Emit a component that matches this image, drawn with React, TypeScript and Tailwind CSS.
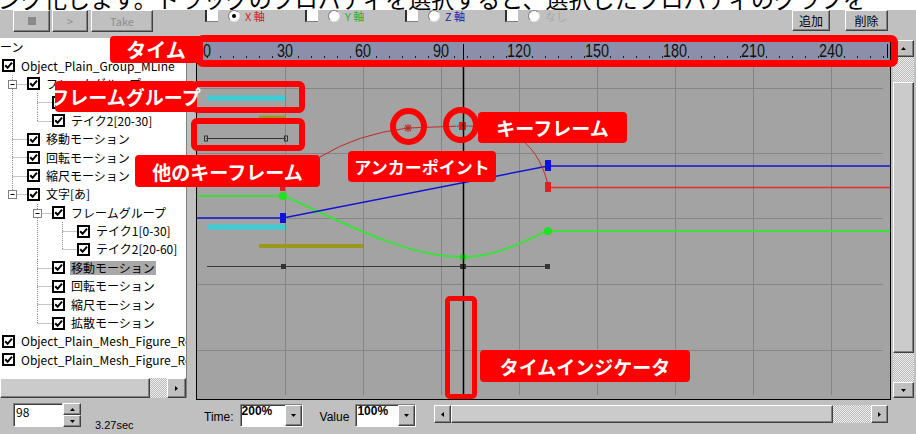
import React from "react";

const raised =
  "bg-[#c0c0c0] border border-t-white border-l-white border-r-[#404040] border-b-[#404040] shadow-[inset_-1px_-1px_0_#808080]";
const sunken =
  "bg-white border border-t-[#808080] border-l-[#808080] border-r-white border-b-white shadow-[inset_1px_1px_0_#404040]";
const dots = "bg-[repeating-conic-gradient(#b8b8b8_0_25%,#f0f0f0_0_50%)] bg-[length:2px_2px]";

type Row = { g: string[]; label: string; sel?: boolean };

const rows: Row[] = [
  { g: [], label: "Object_Plain_Group_MLine" },
  { g: ["Te"], label: "フレームグループ" },
  { g: ["v", "T"], label: "テイク1[0-30]" },
  { g: ["v", "L"], label: "テイク2[20-30]" },
  { g: ["T"], label: "移動モーション" },
  { g: ["T"], label: "回転モーション" },
  { g: ["T"], label: "縮尺モーション" },
  { g: ["Le"], label: "文字[あ]" },
  { g: [" ", "Te"], label: "フレームグループ" },
  { g: [" ", "v", "T"], label: "テイク1[0-30]" },
  { g: [" ", "v", "L"], label: "テイク2[20-60]" },
  { g: [" ", "T"], label: "移動モーション", sel: true },
  { g: [" ", "T"], label: "回転モーション" },
  { g: [" ", "T"], label: "縮尺モーション" },
  { g: [" ", "L"], label: "拡散モーション" },
  { g: [], label: "Object_Plain_Mesh_Figure_Ro" },
  { g: [], label: "Object_Plain_Mesh_Figure_Ro" },
];

const axes = [
  { label: "X 軸", color: "text-[#d42020]", on: true },
  { label: "Y 軸", color: "text-[#2fae2f]", on: false },
  { label: "Z 軸", color: "text-[#2424a8]", on: false },
  { label: "なし", color: "text-[#a8a8a8]", on: false },
];

const frames = [0, 30, 60, 90, 120, 150, 180, 210, 240];
const vGrid = [88, 166, 244, 322, 400, 478, 556, 634];
const hGrid = [28, 93, 158, 224, 290];

function Tri({ dir }: { dir: "up" | "down" | "left" | "right" }) {
  const v = dir === "up" || dir === "down";
  const pts = {
    up: "0,3 2.5,0 5,3",
    down: "0,0 2.5,3 5,0",
    left: "3,0 0,2.5 3,5",
    right: "0,0 3,2.5 0,5",
  }[dir];
  return (
    <svg width={v ? 5 : 3} height={v ? 3 : 5} viewBox={v ? "0 0 5 3" : "0 0 3 5"}>
      <polygon points={pts} fill="black" />
    </svg>
  );
}

function Check() {
  return (
    <svg width="13" height="13" viewBox="0 0 13 13" className="shrink-0">
      <rect x="1" y="1" width="11" height="11" fill="white" stroke="black" strokeWidth="2" />
      <path d="M3.2 6.2 L5.6 8.8 L10 3.6" fill="none" stroke="black" strokeWidth="2" />
    </svg>
  );
}

function Guide({ t }: { t: string }) {
  const dash = { stroke: "#8a8a8a", strokeDasharray: "1 1" };
  return (
    <svg width="25" height="18.4" viewBox="0 0 25 18.4" className="shrink-0">
      {(t === "v" || t.startsWith("T")) && <line x1="10.5" y1="0" x2="10.5" y2="18.4" {...dash} />}
      {t.startsWith("L") && <line x1="10.5" y1="0" x2="10.5" y2="9.5" {...dash} />}
      {t !== " " && t !== "v" && <line x1="10.5" y1="9.5" x2="25" y2="9.5" {...dash} />}
      {t.endsWith("e") && (
        <>
          <rect x="6.5" y="5.5" width="8" height="8" fill="white" stroke="#808080" />
          <line x1="8.5" y1="9.5" x2="12.5" y2="9.5" stroke="black" />
        </>
      )}
    </svg>
  );
}

function Radio({ on }: { on: boolean }) {
  return (
    <span className="ml-[10px] w-[12px] h-[12px] rounded-full bg-white border border-t-[#808080] border-l-[#808080] border-r-[#e4e4e4] border-b-[#e4e4e4] flex items-center justify-center">
      {on && <span className="w-[4px] h-[4px] rounded-full bg-black" />}
    </span>
  );
}

function Ruler() {
  const ticks = Array.from({ length: 53 }, (_, i) => 10 + i * 13);
  return (
    <svg width="693" height="20" className="block bg-[#8c8fa9]">
      {ticks.map((x) => (
        <line key={x} x1={x + 0.5} y1="16" x2={x + 0.5} y2="18" stroke="#1a1a1a" />
      ))}
      {frames.map((f, i) => (
        <text
          key={f}
          x={10 + i * 78}
          y="17"
          textAnchor="middle"
          fontSize="18"
          fontFamily="Liberation Sans, sans-serif"
          textLength={String(f).length * 8}
          lengthAdjust="spacingAndGlyphs"
          fill="#111"
        >
          {f}
        </text>
      ))}
      <line x1="266.5" y1="4" x2="266.5" y2="20" stroke="black" />
      <line x1="690.5" y1="4" x2="690.5" y2="18" stroke="black" />
    </svg>
  );
}

function Graph() {
  return (
    <svg width="693" height="339" className="block bg-[#a3a3a3]">
      {vGrid.map((x) => (
        <line key={x} x1={x + 0.5} y1="0" x2={x + 0.5} y2="335" stroke="#858585" />
      ))}
      {hGrid.map((y) => (
        <line key={y} x1="0" y1={y + 0.5} x2="686" y2={y + 0.5} stroke="#858585" />
      ))}

      {/* frame group bars */}
      <line x1="10" y1="38" x2="88" y2="38" stroke="#3ccdd6" strokeWidth="5" />
      <line x1="62" y1="57" x2="89" y2="57" stroke="#9c981c" strokeWidth="3" />
      <line x1="10" y1="167" x2="88" y2="167" stroke="#3ccdd6" strokeWidth="5" />
      <line x1="62" y1="186" x2="166" y2="186" stroke="#9c981c" strokeWidth="4" />

      {/* other keyframe line */}
      <line x1="9" y1="78.5" x2="89" y2="78.5" stroke="#333" />
      <rect x="7.5" y="76" width="3" height="5" fill="none" stroke="#333" />
      <rect x="87.5" y="76" width="3" height="5" fill="none" stroke="#333" />

      {/* dark track */}
      <line x1="10" y1="206.5" x2="351" y2="206.5" stroke="#3a3a3a" />
      <rect x="84" y="204" width="5" height="5" fill="#333" />
      <rect x="263" y="204" width="6" height="5" fill="#333" />
      <rect x="348" y="204" width="5" height="5" fill="#333" />

      {/* green */}
      <path
        d="M0 136 L86 136 C120 148 200 197 266 197 C300 197 330 180 350 171 L693 171"
        fill="none"
        stroke="#3be03b"
        strokeWidth="2"
      />
      <circle cx="86" cy="136" r="4" fill="#22e022" />
      <circle cx="266" cy="197" r="3.5" fill="#22e022" />
      <circle cx="351" cy="171" r="4" fill="#22e022" />

      {/* red marker + line */}
      <rect x="83" y="125" width="5" height="6" fill="#e02020" />
      <line x1="351" y1="127.5" x2="693" y2="127.5" stroke="#e03030" strokeWidth="1.5" />
      <rect x="348" y="122" width="6" height="10" fill="#e02020" />

      {/* blue */}
      <path d="M0 158 L86 158 L351 106 L693 106" fill="none" stroke="#1414d0" strokeWidth="1.5" />
      <rect x="83" y="153" width="6" height="10" fill="#1010e0" />
      <rect x="348" y="100" width="6" height="11" fill="#1010e0" />

      {/* bezier handle */}
      <path d="M123 97 Q160 74 211 68 L265 66" fill="none" stroke="#c02828" />
      <path d="M265 66 C310 66 338 76 351 124" fill="none" stroke="#c02828" />
      <g stroke="#c02828" strokeWidth="1.2">
        <line x1="207" y1="68" x2="215" y2="68" />
        <line x1="211" y1="64" x2="211" y2="72" />
        <line x1="208" y1="65" x2="214" y2="71" />
        <line x1="214" y1="65" x2="208" y2="71" />
      </g>
      <rect x="259.5" y="59.5" width="12" height="12" fill="none" stroke="#3ccdd6" strokeDasharray="1 1" />
      <rect x="262" y="62" width="7" height="8" fill="#e02020" />

      {/* time indicator */}
      <line x1="266.5" y1="0" x2="266.5" y2="339" stroke="black" strokeWidth="1.5" />
    </svg>
  );
}

function Tag({ className, children }: { className: string; children: React.ReactNode }) {
  return (
    <div
      className={`absolute flex items-center justify-center rounded-[4px] bg-[#ff0000] text-white font-bold leading-none whitespace-nowrap ${className}`}
    >
      {children}
    </div>
  );
}

export default function App() {
  return (
    <div className="relative w-[916px] h-[434px] overflow-hidden bg-[#c0c0c0] font-['Noto_Sans_CJK_JP',sans-serif] text-black">
      {/* caption strip above the window */}
      <div className="h-[10px] bg-white overflow-hidden">
        <div className="-mt-[13px] -ml-[2px] text-[23px] leading-[23px] whitespace-nowrap">
          ング化します。ドラッグのプロパティを選択すると、選択したプロパティのグラフを
        </div>
      </div>

      {/* toolbar */}
      <div className="h-[28px] flex items-start">
        <button className={`ml-[13px] w-[37px] h-[22px] flex items-center justify-center ${raised}`}>
          <span className="w-[8px] h-[8px] bg-[#8a8a8a]" />
        </button>
        <button className={`ml-[2px] w-[36px] h-[22px] flex items-center justify-center text-[11px] text-[#8c8c8c] ${raised}`}>
          &gt;
        </button>
        <button className={`ml-[3px] w-[62px] h-[22px] flex items-center justify-center text-[11px] text-[#8c8c8c] ${raised}`}>
          Take
        </button>
        <div className="ml-[52px] flex">
          {axes.map((a) => (
            <div key={a.label} className="w-[100px] h-[12px] flex items-center">
              <span className="w-[13px] h-[12px] bg-white border-l-2 border-l-[#303030] border-b border-b-[#808080]" />
              <Radio on={a.on} />
              <span className={`ml-[5px] text-[11px] leading-[12px] ${a.color}`}>{a.label}</span>
            </div>
          ))}
        </div>
        <button className={`ml-[187px] w-[38px] h-[21px] flex items-center justify-center text-[12px] ${raised}`}>
          追加
        </button>
        <button className={`ml-[15px] w-[43px] h-[21px] flex items-center justify-center text-[12px] ${raised}`}>
          削除
        </button>
      </div>

      {/* main */}
      <div className="h-[362px] flex items-start">
        {/* tree */}
        <div className="w-[187px] h-[360px] bg-white flex flex-col border-r border-[#808080]">
          <div className="flex-1 overflow-hidden">
            <div className="h-[18.4px] flex items-center text-[12px] leading-[14px]">ーン</div>
            {rows.map((r, i) => (
              <div key={i} className="h-[18.4px] flex items-center pl-[2px] whitespace-nowrap">
                {r.g.map((t, j) => (
                  <Guide key={j} t={t} />
                ))}
                <Check />
                <span className={`ml-[5px] px-[1px] text-[12px] leading-[14px] ${r.sel ? "bg-[#a8a8a8]" : ""}`}>
                  {r.label}
                </span>
              </div>
            ))}
          </div>
          <div className="h-[20px] flex bg-[#c0c0c0]">
            <div className={`w-[150px] ${raised} bg-[#cbcbcb]`} />
            <div className={`flex-1 ${dots}`} />
            <div className={`w-[19px] flex items-center justify-center ${raised}`}>
              <Tri dir="right" />
            </div>
          </div>
        </div>

        <div className="w-[9px]" />

        {/* graph */}
        <div className="mt-[2px] w-[695px] h-[360px] border-l border-r border-b border-black flex flex-col">
          <Ruler />
          <Graph />
        </div>

        {/* vertical scrollbar */}
        <div className="ml-[2px] mt-[2px] w-[21px] h-[358px] flex flex-col">
          <div className={`h-[17px] flex items-center justify-center ${raised}`}>
            <Tri dir="up" />
          </div>
          <div className={`h-[25px] ${dots}`} />
          <div className={`flex-1 ${raised} bg-[#cbcbcb]`} />
          <div className={`h-[29px] ${dots}`} />
          <div className={`h-[16px] flex items-center justify-center ${raised}`}>
            <Tri dir="down" />
          </div>
        </div>
      </div>

      {/* bottom bar */}
      <div className="h-[34px] flex items-start">
        <div className="w-[196px] flex items-start pt-[3px]">
          <div className={`ml-[13px] w-[50px] h-[24px] pl-[2px] pt-[1px] text-[12px] leading-[13px] ${sunken}`}>98</div>
          <div className="w-[18px] h-[24px] flex flex-col">
            <div className={`flex-1 flex items-center justify-center ${raised}`}>
              <Tri dir="up" />
            </div>
            <div className={`flex-1 flex items-center justify-center ${raised}`}>
              <Tri dir="down" />
            </div>
          </div>
          <span className="ml-[14px] mt-[16px] text-[11px] leading-[12px] font-['Liberation_Sans',sans-serif]">3.27sec</span>
        </div>
        <div className="flex items-start pt-[4px]">
          <span className="ml-[8px] mt-[7px] text-[12px] leading-[13px] font-['Liberation_Sans',sans-serif]">Time:</span>
          <div className={`ml-[6px] w-[63px] h-[23px] flex ${sunken}`}>
            <span className="flex-1 pl-[1px] text-[12px] leading-[13px] font-bold font-['Liberation_Sans',sans-serif]">200%</span>
            <span className={`w-[17px] flex items-center justify-center ${raised}`}>
              <Tri dir="down" />
            </span>
          </div>
          <span className="ml-[17px] mt-[7px] text-[12px] leading-[13px] font-['Liberation_Sans',sans-serif]">Value</span>
          <div className={`ml-[6px] w-[61px] h-[23px] flex ${sunken}`}>
            <span className="flex-1 pl-[1px] text-[12px] leading-[13px] font-bold font-['Liberation_Sans',sans-serif]">100%</span>
            <span className={`w-[17px] flex items-center justify-center ${raised}`}>
              <Tri dir="down" />
            </span>
          </div>
          <div className="ml-[18px] mt-[1px] w-[454px] h-[18px] flex">
            <div className={`w-[17px] flex items-center justify-center ${raised}`}>
              <Tri dir="left" />
            </div>
            <div className={`flex-1 ${raised} bg-[#cbcbcb]`} />
            <div className={`w-[38px] ${dots}`} />
            <div className={`w-[17px] flex items-center justify-center ${raised}`}>
              <Tri dir="right" />
            </div>
          </div>
        </div>
      </div>

      {/* annotations */}
      <div className="absolute left-[196px] top-[35px] w-[702px] h-[32px] border-[7px] border-[#ff0000] rounded-[7px]" />
      <Tag className="left-[110px] top-[36px] w-[92px] h-[27px] text-[20px]">タイム</Tag>

      <div className="absolute left-[191px] top-[81px] w-[114px] h-[32px] border-[6px] border-[#ff0000] rounded-[6px]" />
      <div className="absolute left-[191px] top-[118px] w-[114px] h-[33px] border-[6px] border-[#ff0000] rounded-[6px]" />
      <Tag className="left-[55px] top-[81px] w-[141px] h-[31px] text-[19px]">フレームグループ</Tag>
      <Tag className="left-[135px] top-[155px] w-[185px] h-[32px] text-[19px]">他のキーフレーム</Tag>

      <div className="absolute left-[390px] top-[108px] w-[37px] h-[37px] rounded-full border-[6px] border-[#ff0000]" />
      <div className="absolute left-[443px] top-[107px] w-[36px] h-[36px] rounded-full border-[6px] border-[#ff0000]" />
      <Tag className="left-[478px] top-[112px] w-[149px] h-[31px] text-[19px]">キーフレーム</Tag>
      <Tag className="left-[348px] top-[151px] w-[148px] h-[31px] text-[17px]">アンカーポイント</Tag>

      <div className="absolute left-[445px] top-[296px] w-[32px] h-[103px] border-[5px] border-[#ff0000] rounded-[5px]" />
      <Tag className="left-[480px] top-[350px] w-[210px] h-[32px] text-[19px]">タイムインジケータ</Tag>
    </div>
  );
}
